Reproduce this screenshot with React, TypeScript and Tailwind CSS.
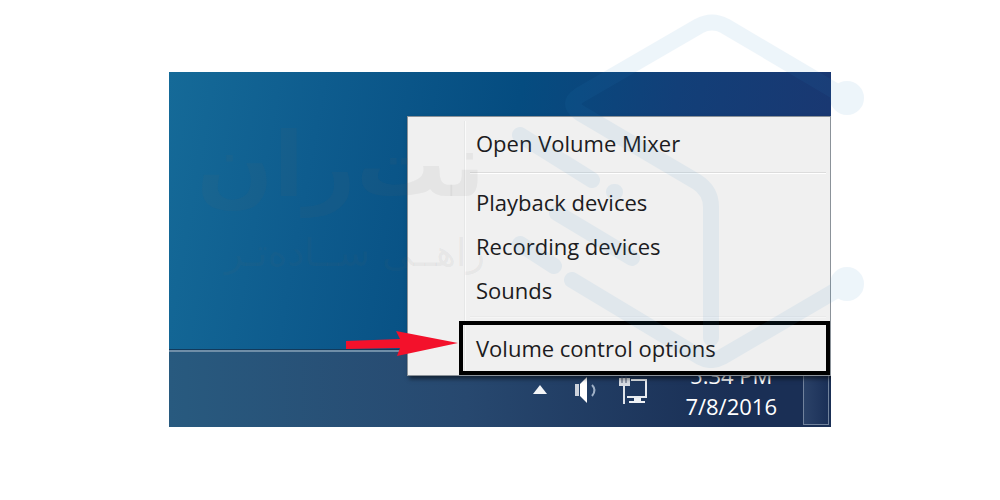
import React from 'react';

const deviceItems = ['Playback devices', 'Recording devices', 'Sounds'];

const itemClass = 'flex h-11 w-full items-center pl-[68px] text-left';

const VolumeMenu: React.FC = () => (
  <div
    role="menu"
    className="absolute top-[44px] right-0 w-[424px] border border-[#8b9299] bg-[#f0f0f0] text-[22px] text-[#1c1b20] shadow-[2px_3px_4px_rgba(0,0,0,0.5)]"
  >
    <div className="absolute inset-y-1 left-[56px] w-0.5 border-l border-[#e6e7e7] bg-[#fafafa]" />
    <div className="relative pt-1">
      <button role="menuitem" className={itemClass}>
        Open Volume Mixer
      </button>
      <hr className="mt-[7px] mr-1 mb-1.5 ml-[62px] h-0.5 border-0 border-t border-[#dcdcdc] bg-white" />
      {deviceItems.map((label) => (
        <button key={label} role="menuitem" className={itemClass}>
          {label}
        </button>
      ))}
      <hr className="mt-1 mr-1 mb-[3px] ml-[62px] h-0.5 border-0 border-t border-[#eaeaea] bg-[#f6f6f6]" />
      <div className="pl-[51px]">
        <button
          role="menuitem"
          className="flex h-[54px] w-full items-center border-4 border-black pl-[13px] text-left"
        >
          Volume control options
        </button>
      </div>
    </div>
  </div>
);

const Taskbar: React.FC = () => (
  <div className="flex h-[77px] items-stretch justify-end border-t-2 border-[#6f8ea8] bg-linear-to-r from-[#285a7f] via-[#27486f] via-45% to-[#1a2f55] to-85% text-white">
    <div className="flex items-center gap-6 pr-9">
      <button aria-label="Show hidden icons">
        <svg width="18" height="12" viewBox="0 0 18 12">
          <path d="M9 1 16 10H2Z" fill="#f4f6f8" />
        </svg>
      </button>
      <button aria-label="Volume">
        <svg width="28" height="30" viewBox="0 0 28 30">
          <path d="M2 9h4v12H2Z" fill="#cdd3dc" />
          <path d="M7 9 14 2v26L7 21Z" fill="#fff" />
          <path d="M19 10q5 5 0 11" fill="none" stroke="#9fb0c6" strokeWidth="2" />
        </svg>
      </button>
      <button aria-label="Network" className="-ml-2">
        <svg width="32" height="30" viewBox="0 0 32 30">
          <path d="M14 5h15v17H10" fill="none" stroke="#e8ecf1" strokeWidth="2" />
          <path d="M17 23h7v3h4v2H12v-2h5Z" fill="#eef1f5" />
          <path d="M2 3h11v8H2Z" fill="#d7dce3" />
          <path d="M5 1v7M9 1v7" stroke="#4a5770" strokeWidth="1" />
          <path d="M7 11v18" stroke="#dfe4ea" strokeWidth="2" />
        </svg>
      </button>
    </div>
    <div className="mr-[26px] flex flex-col items-center justify-end pb-[5px] text-[22px] leading-[31px]">
      <span>5:34 PM</span>
      <span>7/8/2016</span>
    </div>
    <button
      aria-label="Show desktop"
      className="mr-0.5 mb-0.5 w-[26px] border border-[#71829c] bg-linear-to-r from-[#2b4268] to-[#1b3058]"
    />
  </div>
);

const Watermark: React.FC = () => (
  <div className="pointer-events-none absolute inset-0">
    <svg className="absolute top-0 left-[480px]" width="400" height="400" viewBox="480 0 400 400">
      <g opacity="0.08" fill="none" stroke="#2d87c7" strokeWidth="16" strokeLinecap="round" strokeLinejoin="round">
        <path d="M847 98 725 26Q712 19 699 26L580 95Q566 104 580 113L697 182Q711 191 711 207V338" />
        <path d="M520 135 592 180M557 213 632 258M520 244 554 266M614 192h1" />
        <path d="M572 280 700 357Q711 363 722 357L847 284" />
        <circle cx="847" cy="98" r="9" fill="#2d87c7" />
        <circle cx="847" cy="284" r="9" fill="#2d87c7" />
      </g>
    </svg>
    <div
      dir="rtl"
      lang="fa"
      className="absolute top-[105px] left-[200px] w-[285px] font-['DejaVu_Sans',sans-serif] whitespace-nowrap text-[#666666]/8"
    >
      <p className="text-[90px] leading-[120px] font-bold">نت‌ران</p>
      <p className="text-[38px] leading-[56px]">راهــی ســاده‌تـر</p>
    </div>
  </div>
);

const App: React.FC = () => (
  <main className="relative min-h-screen bg-white px-[169px] pt-[72px] font-['Open_Sans','Noto_Sans',sans-serif]">
    <div className="relative overflow-hidden">
      <div className="h-[278px] border-b border-[#123a5c] bg-[linear-gradient(100deg,#156a98_0%,#0e5c8e_22%,#054c80_50%,#123f78_72%,#1b3670_100%)]" />
      <Taskbar />
      <VolumeMenu />
      <svg
        className="absolute top-[258px] left-[177px]"
        width="114"
        height="28"
        viewBox="0 0 114 28"
        aria-hidden="true"
      >
        <path d="M0 11 54 9 50 1 112 13 51 26 54 18 0 19Z" fill="#f3112b" />
      </svg>
    </div>
    <Watermark />
  </main>
);

export default App;
